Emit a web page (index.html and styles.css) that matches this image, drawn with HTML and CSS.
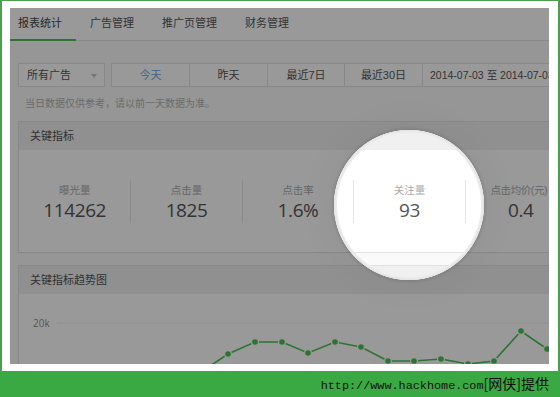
FILE: index.html
```html
<!DOCTYPE html>
<html lang="zh-CN">
<head>
    <meta charset="UTF-8">
    <meta name="viewport" content="width=device-width, initial-scale=1.0">
    <title>报表统计</title>
    <link rel="stylesheet" href="styles.css">
</head>
<body>
    <div class="frame">
        <div class="shot">
            <div class="page">
                <div class="tabs">
                    <div class="tab active">报表统计</div>
                    <div class="tab">广告管理</div>
                    <div class="tab">推广页管理</div>
                    <div class="tab">财务管理</div>
                </div>

                <div class="filter-row">
                    <div class="select">所有广告<span class="caret"></span></div>
                    <div class="range-group">
                        <div class="range-btn current">今天</div>
                        <div class="range-btn">昨天</div>
                        <div class="range-btn narrow">最近7日</div>
                        <div class="range-btn">最近30日</div>
                        <div class="range-date">2014-07-03 至 2014-07-03</div>
                    </div>
                </div>

                <div class="notice">当日数据仅供参考，请以前一天数据为准。</div>

                <div class="card">
                    <div class="card-header">关键指标</div>
                    <div class="card-body metrics">
                        <div class="metric">
                            <div class="metric-label">曝光量</div>
                            <div class="metric-value">114262</div>
                        </div>
                        <div class="metric">
                            <div class="metric-label">点击量</div>
                            <div class="metric-value">1825</div>
                        </div>
                        <div class="metric">
                            <div class="metric-label">点击率</div>
                            <div class="metric-value">1.6%</div>
                        </div>
                        <div class="metric">
                            <div class="metric-label">关注量</div>
                            <div class="metric-value">93</div>
                        </div>
                        <div class="metric">
                            <div class="metric-label tight">点击均价(元)</div>
                            <div class="metric-value">0.4</div>
                        </div>
                    </div>
                </div>

                <div class="card">
                    <div class="card-header">关键指标趋势图</div>
                    <div class="card-body">
                        <svg class="chart" width="560" height="90" viewBox="0 0 560 90">
                            <line x1="38" y1="29" x2="560" y2="29" stroke="#ececec" stroke-width="1"/>
                            <text x="14" y="33" class="axis-label">20k</text>
                            <polyline fill="none" stroke="#4cbf55" stroke-width="1.6"
                                points="155,96 182,78 209,60 236,48 263,48 289,59 316,48 342,53 369,67 395,67 422,65 449,70 475,67 502,37 528,55 555,46"/>
                            <g fill="#4cbf55" stroke="#ffffff" stroke-width="1.2">
                                <circle cx="182" cy="78" r="3.4"/>
                                <circle cx="209" cy="60" r="3.4"/>
                                <circle cx="236" cy="48" r="3.4"/>
                                <circle cx="263" cy="48" r="3.4"/>
                                <circle cx="289" cy="59" r="3.4"/>
                                <circle cx="316" cy="48" r="3.4"/>
                                <circle cx="342" cy="53" r="3.4"/>
                                <circle cx="369" cy="67" r="3.4"/>
                                <circle cx="395" cy="67" r="3.4"/>
                                <circle cx="422" cy="65" r="3.4"/>
                                <circle cx="449" cy="70" r="3.4"/>
                                <circle cx="475" cy="67" r="3.4"/>
                                <circle cx="502" cy="37" r="3.4"/>
                                <circle cx="528" cy="55" r="3.4"/>
                                <circle cx="555" cy="46" r="3.4"/>
                            </g>
                        </svg>
                    </div>
                </div>
            </div>

            <!-- dark overlay with the magnifier hole -->
            <div class="lens-overlay"></div>
        </div>
    </div>
    <div class="footer">http://www.hackhome.com<span class="footer-cjk">[网侠]提供</span></div>
</body>
</html>
```

FILE: styles.css
```css
* {
    margin: 0;
    padding: 0;
    box-sizing: border-box;
}

body {
    width: 560px;
    height: 397px;
    overflow: hidden;
    background: #fff;
    font-family: "Liberation Sans", "Noto Sans CJK SC", sans-serif;
}

.frame {
    height: 371px;
    border-top: 1px solid #48a04c;
    border-left: 2px solid #48a04c;
    border-right: 2px solid #48a04c;
    padding: 7px 9px 7px 8px;
    background: #fff;
}

.shot {
    position: relative;
    width: 539px;
    height: 356px;
    overflow: hidden;
    background: #fafafa;
}

.page {
    width: 620px;
    padding-left: 8px;
}

.tabs {
    display: flex;
    margin-left: -14px;
    background: #fff;
    border-bottom: 1px solid #e4e4e4;
}

.tab {
    padding: 0 14px;
    font-size: 11px;
    line-height: 31px;
    color: #555;
    border-bottom: 2px solid transparent;
    margin-bottom: -1px;
}

.tab.active {
    color: #444;
    border-bottom-color: #4cbf55;
}

.filter-row {
    display: flex;
    margin-top: 22px;
    height: 24px;
    font-size: 11px;
}

.select {
    position: relative;
    width: 87px;
    padding-left: 8px;
    line-height: 22px;
    color: #555;
    background: #fff;
    border: 1px solid #e2e2e2;
}

.caret {
    position: absolute;
    right: 7px;
    top: 10px;
    border-left: 3px solid transparent;
    border-right: 3px solid transparent;
    border-top: 4px solid #c4c4c4;
}

.range-group {
    display: flex;
    margin-left: 6px;
    background: #fff;
    border: 1px solid #e2e2e2;
}

.range-btn {
    width: 78px;
    text-align: center;
    line-height: 22px;
    color: #555;
    border-right: 1px solid #e2e2e2;
}

.range-btn.narrow {
    width: 77px;
}

.range-btn.current {
    color: #6ea6e6;
}

.range-date {
    padding-left: 7px;
    width: 200px;
    font-size: 10.5px;
    line-height: 22px;
    color: #555;
}

.notice {
    margin-top: 10px;
    font-size: 10px;
    line-height: 14px;
    color: #b2b2b2;
    padding-left: 7px;
}

.card {
    width: 559px;
    margin-top: 10px;
    background: #fff;
    border: 1px solid #e2e2e2;
}

.card + .card {
    margin-top: 12px;
}

.card-header {
    height: 28px;
    line-height: 28px;
    padding-left: 11px;
    font-size: 11px;
    color: #505050;
    background: #f0f0f0;
}

.metrics {
    display: grid;
    grid-template-columns: repeat(5, 1fr);
    padding: 30px 0 29px;
}

.metric {
    height: 43px;
    display: flex;
    flex-direction: column;
    justify-content: center;
    align-items: center;
}

.metric + .metric {
    border-left: 1px solid #e6e6e6;
}

.metric-label {
    font-size: 10.5px;
    line-height: 16px;
    color: #aaa;
}

.metric-label.tight {
    letter-spacing: -0.4px;
    margin-right: 4px;
}

.metric-value {
    font-family: "Open Sans", "Liberation Sans", sans-serif;
    font-size: 19px;
    line-height: 24px;
    letter-spacing: -0.4px;
    color: #555;
}

.chart {
    display: block;
}

.axis-label {
    font-family: "Open Sans", sans-serif;
    font-size: 10px;
    fill: #909090;
}

.lens-overlay {
    position: absolute;
    top: 0;
    left: 0;
    right: 0;
    bottom: 0;
    pointer-events: none;
    background: radial-gradient(circle 110px at 399px 197px,
        rgba(0, 0, 0, 0) 71.5px,
        #ededed 72.5px,
        #e3e3e3 75px,
        rgba(0, 0, 0, 0.46) 75.5px,
        rgba(0, 0, 0, 0.41) 79px,
        rgba(0, 0, 0, 0.4) 110px);
}

.footer {
    height: 26px;
    background: #3aa843;
    text-align: right;
    padding-right: 11px;
    font-family: "Liberation Mono", "Noto Sans CJK SC", monospace;
    font-size: 11.8px;
    line-height: 25px;
    color: #111;
}

.footer-cjk {
    font-family: "Noto Sans CJK SC", sans-serif;
    font-size: 14px;
}
```
